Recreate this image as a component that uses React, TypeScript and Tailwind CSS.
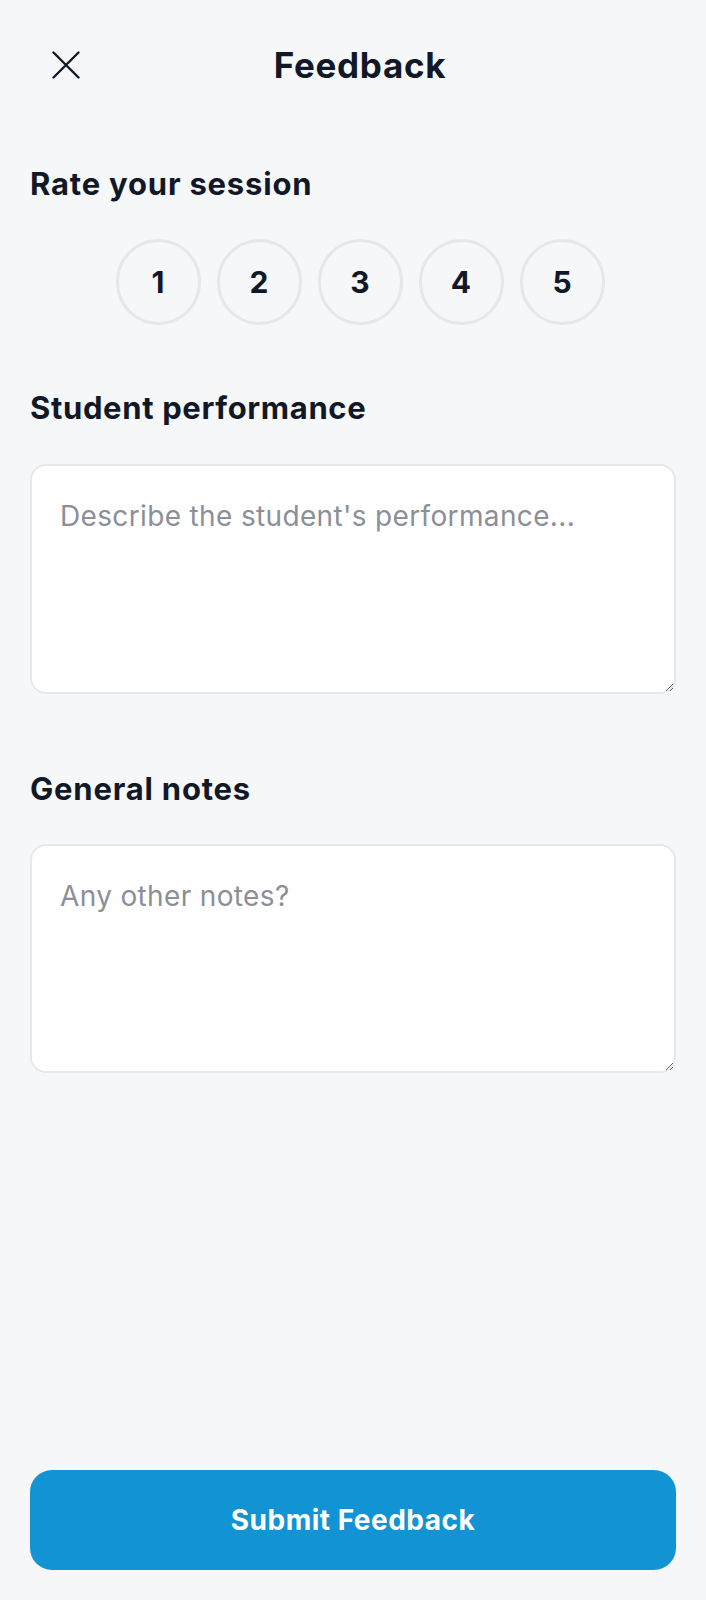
import React from "react";

export default function App() {
  return (
    <div
      className="min-h-[1600px] w-full bg-[#f6f7f9] flex flex-col text-[#111827]"
      style={{ fontFamily: "Inter, 'Noto Sans', sans-serif" }}
    >
      {/* Header */}
      <div className="flex items-center pt-[43px] pl-[44px] pr-[30px] h-[87px]">
        <button className="w-[44px] h-[44px] flex items-center justify-center">
          <svg width="28" height="28" viewBox="0 0 28 28" fill="none">
            <path
              d="M1.5 1.5 L26.5 26.5 M26.5 1.5 L1.5 26.5"
              stroke="#111827"
              strokeWidth="2.4"
              strokeLinecap="round"
            />
          </svg>
        </button>
        <div className="flex-1 text-center text-[35px] leading-[44px] font-bold tracking-[0.7px]">
          Feedback
        </div>
        <div className="w-[44px] h-[44px]" />
      </div>

      <div className="px-[30px] flex flex-col flex-1">
        <div className="mt-[78px] text-[31px] leading-[38px] font-bold tracking-[0.8px]">
          Rate your session
        </div>
        <div className="mt-[36px] flex justify-center gap-[16px] pl-[14px]">
          {[1, 2, 3, 4, 5].map((n) => (
            <button
              key={n}
              className="w-[85px] h-[86px] rounded-full border-[3px] border-[#e5e7eb] flex items-center justify-center text-[30px] font-bold text-[#111827]"
            >
              {n}
            </button>
          ))}
        </div>

        <div className="mt-[64px] text-[31px] leading-[38px] font-bold tracking-[0.65px]">
          Student performance
        </div>
        <textarea
          className="mt-[37px] h-[230px] w-full bg-white border-2 border-[#e6e8eb] rounded-[16px] px-[28px] py-[29px] text-[28px] leading-[42px] tracking-[0.35px] text-[#111827] placeholder:text-[#8b8f98] resize-y outline-none"
          placeholder="Describe the student's performance..."
        />

        <div className="mt-[76px] text-[31px] leading-[38px] font-bold tracking-[0.8px]">
          General notes
        </div>
        <textarea
          className="mt-[36px] h-[229px] w-full bg-white border-2 border-[#e6e8eb] rounded-[16px] px-[28px] py-[29px] text-[28px] leading-[42px] tracking-[0.35px] text-[#111827] placeholder:text-[#8b8f98] resize-y outline-none"
          placeholder="Any other notes?"
        />

        <div className="flex-1" />

        <button className="mb-[30px] h-[100px] w-full rounded-[22px] bg-[#1193d4] text-white text-[28px] font-bold tracking-[0.5px]">
          Submit Feedback
        </button>
      </div>
    </div>
  );
}
